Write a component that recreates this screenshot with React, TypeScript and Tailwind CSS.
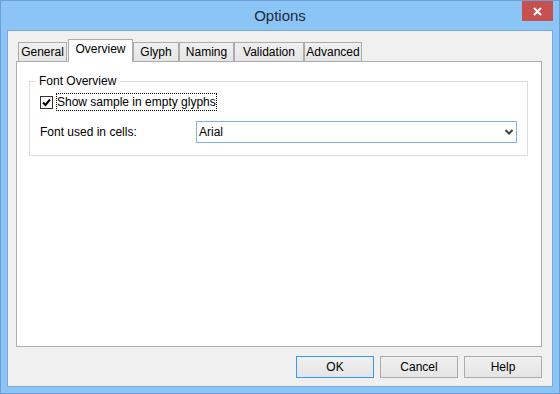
import React from "react";

interface TabItem {
  label: string;
  width: string;
  active?: boolean;
}

const tabs: TabItem[] = [
  { label: "General", width: "w-[49px] ml-[2px]" },
  { label: "Overview", width: "w-[65px] ml-[1px]", active: true },
  { label: "Glyph", width: "w-[46px]" },
  { label: "Naming", width: "w-[55px]" },
  { label: "Validation", width: "w-[70px]" },
  { label: "Advanced", width: "w-[58px]" },
];

const Tab: React.FC<{ tab: TabItem }> = ({ tab }): React.ReactElement => {
  if (tab.active) {
    return (
      <div
        className={`${tab.width} h-[23px] border border-b-0 border-[#acacac] bg-white pt-[2px] text-center leading-[14px]`}
      >
        {tab.label}
      </div>
    );
  }
  return (
    <div
      className={`${tab.width} h-[20px] border border-[#acacac] bg-linear-to-b from-[#f0f0f0] to-[#e5e5e5] pt-[2px] text-center leading-[14px]`}
    >
      {tab.label}
    </div>
  );
};

const DialogButton: React.FC<{ label: string; isDefault?: boolean }> = ({
  label,
  isDefault,
}): React.ReactElement => (
  <button
    className={`w-[78px] h-[22px] border ${
      isDefault ? "border-[#3399ff]" : "border-[#acacac]"
    } bg-linear-to-b from-[#f0f0f0] to-[#e5e5e5] text-[12px] leading-[20px] text-black`}
  >
    {label}
  </button>
);

const App: React.FC = (): React.ReactElement => {
  return (
    <div
      className="w-[560px] h-[394px] flex flex-col border border-[#6d9dd2] bg-[#8bc5f6] text-[12px] text-black select-none"
      style={{ fontFamily: '"Liberation Sans", Arial, sans-serif' }}
    >
      {/* title bar */}
      <div className="h-[29px] grid grid-cols-[1fr_auto_1fr]">
        <div />
        <div className="text-[15px] leading-[29px] text-[#1e2a36]">Options</div>
        <div className="flex justify-end items-start pr-[6px]">
          <div className="w-[31px] h-[20px] bg-[#c75050] flex items-center justify-center">
            <svg width="9" height="9" viewBox="0 0 9 9">
              <path d="M1 1 L8 8 M8 1 L1 8" stroke="#ffffff" strokeWidth="2" />
            </svg>
          </div>
        </div>
      </div>

      {/* client area */}
      <div className="mx-[6px] h-[357px] border border-[#7aa8d8] bg-[#f0f0f0] pl-[8px] pt-[8px] flex flex-col">
        <div className="relative z-10 -mb-px flex items-end h-[23px]">
          {tabs.map((t) => (
            <Tab key={t.label} tab={t} />
          ))}
        </div>

        <div className="w-[526px] h-[286px] border border-[#acacac] bg-white pl-[12px] pt-[19px]">
          <div className="relative w-[499px] border border-[#dcdcdc] pl-[10px] pt-[11px] pb-[12px]">
            <div className="absolute left-[5px] top-[-8px] bg-white px-[4px] leading-[14px]">
              Font Overview
            </div>

            <div className="flex items-center h-[18px]">
              <div className="w-[13px] h-[13px] border border-[#333333] bg-white flex items-center justify-center">
                <svg width="9" height="9" viewBox="0 0 9 9">
                  <path
                    d="M1 4.5 L3.5 7 L8 1.5"
                    stroke="#000000"
                    strokeWidth="2"
                    fill="none"
                  />
                </svg>
              </div>
              <div className="ml-[3px] h-[18px] border border-dotted border-black px-[0px] leading-[16px]">
                Show sample in empty glyphs
              </div>
            </div>

            <div className="mt-[10px] flex items-center h-[22px]">
              <div className="w-[156px]">Font used in cells:</div>
              <div className="w-[321px] h-[22px] border border-[#7eb4ea] bg-white flex items-center justify-between pl-[2px] pr-[3px]">
                <span>Arial</span>
                <svg width="8" height="6" viewBox="0 0 8 6">
                  <path
                    d="M0.5 1 L4 4.5 L7.5 1"
                    stroke="#444444"
                    strokeWidth="2"
                    fill="none"
                  />
                </svg>
              </div>
            </div>
          </div>
        </div>

        <div className="mt-[9px] w-[526px] flex justify-end gap-[6px]">
          <DialogButton label="OK" isDefault />
          <DialogButton label="Cancel" />
          <DialogButton label="Help" />
        </div>
      </div>
    </div>
  );
};

export default App;
